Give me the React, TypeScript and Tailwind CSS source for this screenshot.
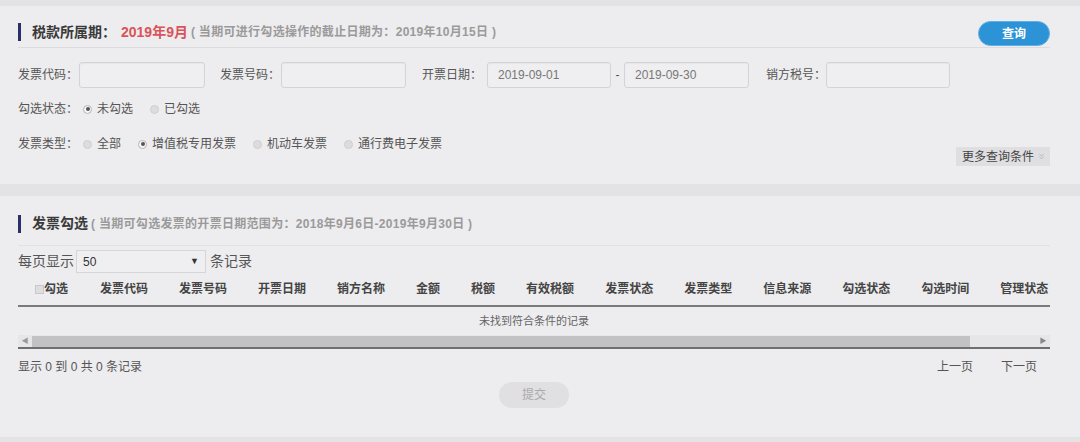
import React from "react";
import { ChevronsDown } from "lucide-react";

const font = { fontFamily: '"Liberation Sans", "Noto Sans CJK SC", sans-serif' };

const Radio = ({ checked }: { checked?: boolean }) => (
  <span
    className={`w-[9px] h-[9px] rounded-full border flex items-center justify-center ${
      checked ? "border-[#b5b5b5] bg-[#f7f7f7]" : "border-[#cfcfcf] bg-[#dcdcdc]"
    }`}
  >
    {checked && <span className="w-[4px] h-[4px] rounded-full bg-[#555]" />}
  </span>
);

const RadioItem = ({ label, checked }: { label: string; checked?: boolean }) => (
  <div className="flex items-center gap-[5px] mr-[17px]">
    <Radio checked={checked} />
    <span>{label}</span>
  </div>
);

const Input = ({ w, value }: { w: string; value?: string }) => (
  <div
    className={`${w} h-[26px] rounded-[3px] border border-[#d4d4d6] bg-[#efeef0] shadow-[inset_0_1px_1px_rgba(0,0,0,0.04)] flex items-center pl-[10px] text-[12px] text-[#777]`}
  >
    {value}
  </div>
);

const Title = ({ main, red, sub }: { main: string; red?: string; sub: string }) => (
  <div className="flex items-center">
    <span className="w-[3px] h-[18px] bg-[#2c2e6a] mr-[11px]" />
    <span className="text-[14px] font-bold text-[#3a3a3a]">{main}</span>
    {red && <span className="text-[14px] font-bold text-[#d9545a] ml-[5px]">{red}</span>}
    <span className="text-[12px] font-semibold tracking-[0.3px] text-[#9a9a9a] ml-[3px]">{sub}</span>
  </div>
);

const columns = [
  "发票代码",
  "发票号码",
  "开票日期",
  "销方名称",
  "金额",
  "税额",
  "有效税额",
  "发票状态",
  "发票类型",
  "信息来源",
  "勾选状态",
  "勾选时间",
  "管理状态",
];

export default function App() {
  return (
    <div style={font} className="w-[1080px] h-[442px] bg-[#e3e2e4] pt-[6px] flex flex-col gap-[12px] overflow-hidden">
      {/* query panel */}
      <div className="h-[178px] bg-[#edecee] pl-[18px] pr-[30px] pt-[11px] text-[12px] text-[#555]">
        <div className="h-[31px] flex items-center justify-between border-b border-[#dcdcde]">
          <Title main="税款所属期：" red="2019年9月" sub="( 当期可进行勾选操作的截止日期为：2019年10月15日 )" />
          <button className="self-end mb-[1px] w-[72px] h-[25px] rounded-full bg-[#2b93d6] border border-[#5fb0e4] text-white text-[12px] font-semibold">
            查询
          </button>
        </div>

        <div className="mt-[14px] h-[26px] flex items-center">
          <span className="w-[61px]">发票代码：</span>
          <Input w="w-[126px]" />
          <span className="ml-[15px] w-[61px]">发票号码：</span>
          <Input w="w-[125px]" />
          <span className="ml-[16px] w-[65px]">开票日期：</span>
          <Input w="w-[124px]" value="2019-09-01" />
          <span className="w-[13px] text-center">-</span>
          <Input w="w-[125px]" value="2019-09-30" />
          <span className="ml-[17px] w-[60px]">销方税号：</span>
          <Input w="w-[124px]" />
        </div>

        <div className="mt-[11px] h-[20px] flex items-center">
          <span className="w-[65px]">勾选状态：</span>
          <RadioItem label="未勾选" checked />
          <RadioItem label="已勾选" />
        </div>

        <div className="mt-[15px] h-[32px] flex justify-between">
          <div className="h-[20px] flex items-center">
            <span className="w-[65px]">发票类型：</span>
            <RadioItem label="全部" />
            <RadioItem label="增值税专用发票" checked />
            <RadioItem label="机动车发票" />
            <RadioItem label="通行费电子发票" />
          </div>
          <div className="self-end h-[19px] w-[94px] bg-[#dfdee1] flex items-center pl-[6px] gap-[3px] text-[#444]">
            <span>更多查询条件</span>
            <ChevronsDown size={9} className="text-[#aaa]" />
          </div>
        </div>
      </div>

      {/* result panel */}
      <div className="h-[241px] bg-[#edecee] pl-[18px] pr-[30px] pt-[6px] text-[12px] text-[#555]">
        <div className="h-[44px] flex items-center border-b border-[#e2e1e3]">
          <Title main="发票勾选" sub="( 当期可勾选发票的开票日期范围为：2018年9月6日-2019年9月30日 )" />
        </div>

        <div className="mt-[4px] h-[23px] flex items-center text-[14px]">
          <span>每页显示</span>
          <div className="ml-[2px] w-[130px] h-[23px] border border-[#d6d6d8] bg-[#efeef0] flex items-center justify-between pl-[6px] pr-[6px] text-[12px] text-[#333]">
            <span>50</span>
            <span className="text-[9px] text-[#333]">▼</span>
          </div>
          <span className="ml-[4px]">条记录</span>
        </div>

        <div className="h-[34px] flex items-center pl-[17px] gap-[31px] border-b-2 border-[#7a7a7a] text-[12px] font-semibold text-[#444]">
          <div className="flex items-center mr-[1px]">
            <span className="w-[9px] h-[9px] border border-[#c8c8c8] bg-[#dedede]" />
            <span>勾选</span>
          </div>
          {columns.map((c) => (
            <span key={c}>{c}</span>
          ))}
        </div>

        <div className="h-[28px] flex items-center justify-center text-[11px] text-[#666]">未找到符合条件的记录</div>

        <div className="h-[12px] bg-[#e6e6e8] flex items-center border-b-2 border-[#6f6f6f] box-content">
          <span className="w-[14px] text-[7px] text-[#999] text-center">◀</span>
          <div className="w-[938px] h-[11px] bg-[#c2c1c4]" />
          <div className="flex-1" />
          <span className="w-[14px] text-[7px] text-[#888] text-center">▶</span>
        </div>

        <div className="pt-[3px] h-[33px] flex items-center justify-between text-[12px] text-[#555]">
          <span>显示 0 到 0 共 0 条记录</span>
          <div className="flex gap-[28px] pr-[13px]">
            <span>上一页</span>
            <span>下一页</span>
          </div>
        </div>

        <div className="flex justify-center">
          <button className="w-[70px] h-[26px] rounded-full bg-[#e0dfe2] text-[12px] text-[#aaa]">提交</button>
        </div>
      </div>
    </div>
  );
}
